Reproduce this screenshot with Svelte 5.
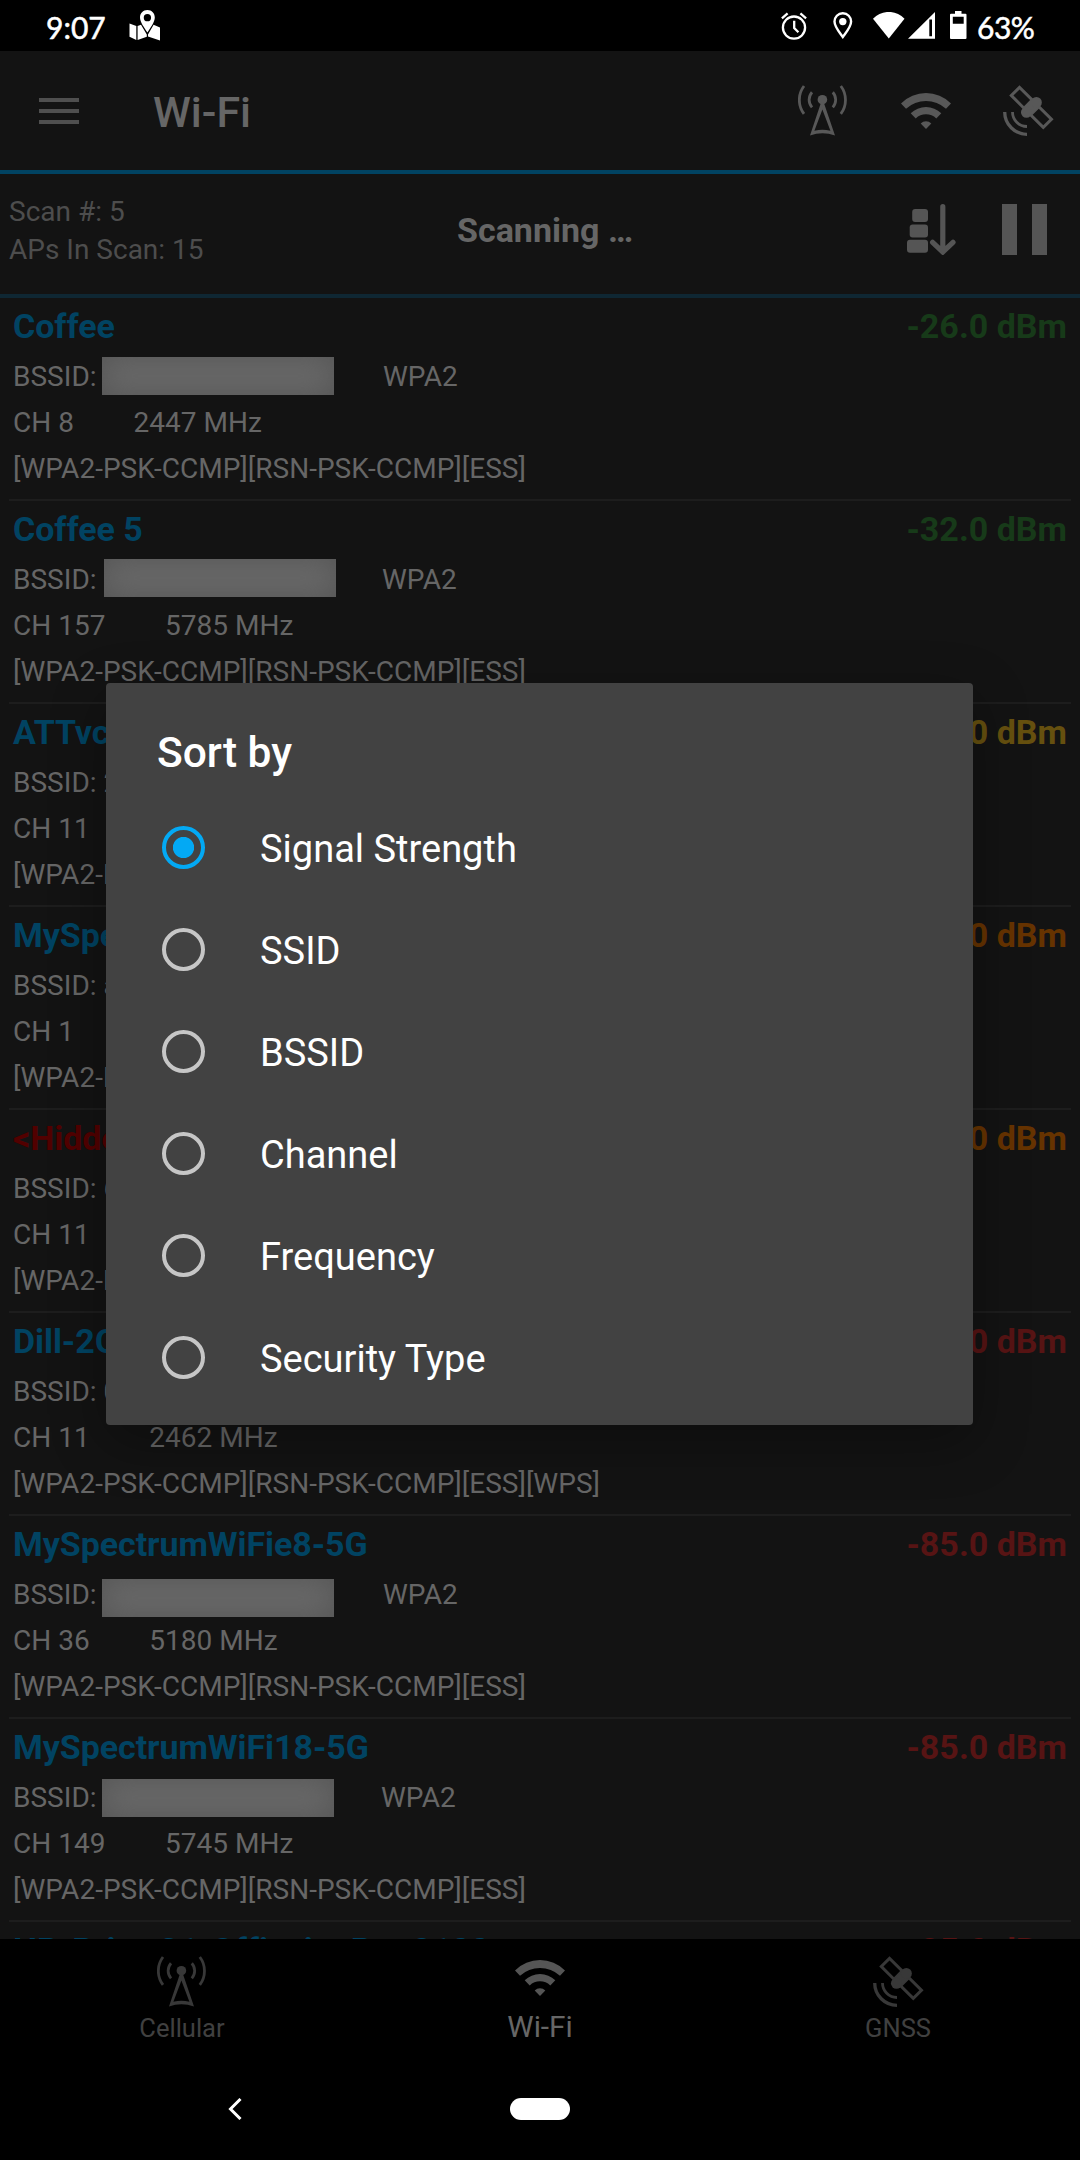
<script>
  const networks = [
    { ssid: 'Coffee', dbm: '-26.0', level: 'great', mac: '', security: 'WPA2', channel: 8, mhz: 2447, caps: '[WPA2-PSK-CCMP][RSN-PSK-CCMP][ESS]', mask: { x: 102, y: 59 }, secX: 370 },
    { ssid: 'Coffee 5', dbm: '-32.0', level: 'great', mac: '', security: 'WPA2', channel: 157, mhz: 5785, caps: '[WPA2-PSK-CCMP][RSN-PSK-CCMP][ESS]', mask: { x: 104, y: 58 }, secX: 369 },
    { ssid: 'ATTvc', dbm: '-64.0', level: 'good', mac: '2', security: '', channel: 11, mhz: 2462, caps: '[WPA2-PSK-CCMP][ESS]', secX: 370 },
    { ssid: 'MySpectrumWiFi', dbm: '-76.0', level: 'fair', mac: 'a', security: '', channel: 1, mhz: 2412, caps: '[WPA2-PSK-CCMP][ESS]', secX: 370 },
    { ssid: '<Hidden SSID>', dbm: '-77.0', level: 'fair', hidden: true, mac: '6', security: '', channel: 11, mhz: 2462, caps: '[WPA2-PSK-CCMP][ESS]', secX: 370 },
    { ssid: 'Dill-2G', dbm: '-84.0', level: 'poor', mac: '0', security: '', channel: 11, mhz: 2462, caps: '[WPA2-PSK-CCMP][RSN-PSK-CCMP][ESS][WPS]', secX: 370 },
    { ssid: 'MySpectrumWiFie8-5G', dbm: '-85.0', level: 'poor', mac: '', security: 'WPA2', channel: 36, mhz: 5180, caps: '[WPA2-PSK-CCMP][RSN-PSK-CCMP][ESS]', mask: { x: 102, y: 63 }, secX: 370 },
    { ssid: 'MySpectrumWiFi18-5G', dbm: '-85.0', level: 'poor', mac: '', security: 'WPA2', channel: 149, mhz: 5745, caps: '[WPA2-PSK-CCMP][RSN-PSK-CCMP][ESS]', mask: { x: 102, y: 60 }, secX: 368 },
    { ssid: 'HP-Print-21-Officejet Pro 8100', dbm: '-85.0', level: 'poor', mac: '', security: 'WPA2', channel: 6, mhz: 2437, caps: '[ESS]', secX: 370 }
  ];

  const sortOptions = ['Signal Strength', 'SSID', 'BSSID', 'Channel', 'Frequency', 'Security Type'];
  let selected = $state('Signal Strength');

  const tabs = [
    { label: 'Cellular', icon: 'tower' },
    { label: 'Wi-Fi', icon: 'wifi', active: true },
    { label: 'GNSS', icon: 'satellite' }
  ];
</script>

{#snippet icon(name)}
  <svg class="icon" viewBox="0 0 51 51" fill="currentColor" stroke="none">
    {#if name === 'tower'}
      <circle cx="24.4" cy="14.7" r="4.8" />
      <path fill-rule="evenodd" d="M23.2 17h2.4L37 50.6Q24.4 46 12 50.6ZM24.4 24.5L16.4 45.8Q24.4 43.6 32.4 45.8Z" />
      <g fill="none" stroke="currentColor" stroke-width="2.8">
        <path d="M6 1A23 23 0 0 0 6 28.8M14 7.2A11.5 11.5 0 0 0 14 22.4" />
        <path d="M42.8 1A23 23 0 0 1 42.8 28.8M34.8 7.2A11.5 11.5 0 0 1 34.8 22.4" />
      </g>
    {:else if name === 'wifi'}
      <g transform="translate(0 8)">
        <path d="M0 10.4A35.5 35.5 0 0 1 50 10.4L45 15.8A29.8 29.8 0 0 0 5 15.8Z" />
        <path d="M9.7 20.3A21.7 21.7 0 0 1 40.3 20.3L35.3 25.4A15 15 0 0 0 14.7 25.4Z" />
        <path d="M19.7 30.4A7.6 7.6 0 0 1 30.3 30.4L25 36Z" />
      </g>
    {:else}
      <g transform="translate(28.4 22.4) rotate(45)">
        <g fill="none" stroke="currentColor" stroke-width="3">
          <rect x="-22.6" y="-5.8" width="18" height="11.6" />
          <rect x="4.6" y="-5.8" width="18" height="11.6" />
        </g>
        <rect x="-5" y="-7" width="10" height="14" />
        <circle cy="-7" r="5.5" />
        <circle cy="7" r="5.5" />
      </g>
      <path fill="none" stroke="currentColor" stroke-width="3.3" d="M1.7 27A22.3 22.3 0 0 0 24 49.3" />
      <path fill="none" stroke="currentColor" stroke-width="2.8" d="M9.5 27A14.5 14.5 0 0 0 24 41.5" />
    {/if}
  </svg>
{/snippet}

<div class="screen">
  <header class="status">
    <span class="clock">9:07</span>
    <svg class="map" viewBox="0 0 31 31" fill="#fff">
      <path d="M.5 13.5L7.3 16V30L.5 26.8ZM8.6 16L12 14.8 17.8 24.5V26.8L8.6 30ZM19 24.5L24.6 14.8 31 17.4V30.6L19 26.6Z" />
      <path fill-rule="evenodd" d="M18.4 0C22.8 0 25.8 3.3 25.8 7.4 25.8 12 21.5 17.5 18.4 22.6 15.3 17.5 11 12 11 7.4 11 3.3 14 0 18.4 0ZM18.4 4A3.6 3.6 0 1 0 18.4 11.3 3.6 3.6 0 1 0 18.4 4Z" />
    </svg>
    <span class="grow"></span>
    <svg class="alarm" viewBox="0 0 26 28" fill="none" stroke="#fff" stroke-width="2.3">
      <circle cx="13" cy="15.6" r="11.1" />
      <path d="M13.2 8.8V16L17.4 20.2M.9 6.4L6.6 1.4M25.1 6.4L19.4 1.4" />
    </svg>
    <svg class="place" viewBox="0 0 20 27">
      <path fill="none" stroke="#fff" stroke-width="2.4" d="M9.8 1.3C5 1.3 1.5 5 1.5 9.6 1.5 15 6.5 20.5 9.8 25 13.1 20.5 18.1 15 18.1 9.6 18.1 5 14.6 1.3 9.8 1.3Z" />
      <circle cx="9.8" cy="9.6" r="3.7" fill="#fff" />
    </svg>
    <svg class="fan" viewBox="0 0 32 27" fill="#fff"><path d="M0 6.8C9-2.4 22.7-2.4 31.5 6.8L15.8 26.4Z" /></svg>
    <svg class="cell" viewBox="0 0 27 27" fill="#fff"><path fill-rule="evenodd" d="M27 0V26.8H0ZM21.3 7.5V24.2H24V7.5Z" /></svg>
    <svg class="battery" viewBox="0 0 17 28" fill="#fff"><path fill-rule="evenodd" d="M5 0H11.5V2.7H15.5Q16.5 2.7 16.5 3.7V27Q16.5 28 15.5 28H1Q0 28 0 27V3.7Q0 2.7 1 2.7H5ZM2.8 5.7V12.7H13.7V5.7Z" /></svg>
    <span class="percent">63%</span>
  </header>

  <div class="appbar">
    <div class="menu"><i></i><i></i><i></i></div>
    <h1>Wi-Fi</h1>
    <div class="actions">
      {@render icon('tower')}
      {@render icon('wifi')}
      {@render icon('satellite')}
    </div>
  </div>

  <section class="scanbar">
    <div class="counts">
      <div>Scan #: 5</div>
      <div>APs In Scan: 15</div>
    </div>
    <div class="scanning">Scanning …</div>
    <div class="tools">
      <svg class="sort" viewBox="0 0 49 51" fill="currentColor">
        <rect x="5.2" y="5" width="15.8" height="13" rx="3" />
        <rect x="2.7" y="20.4" width="18.3" height="13" rx="3" />
        <rect y="35.7" width="21" height="13" rx="3" />
        <path fill="none" stroke="currentColor" stroke-width="5.2" stroke-linecap="round" d="M35.8 2.7V47M25.6 38.3L35.8 48 46 38.3" />
      </svg>
      <div class="pause"><i></i><i></i></div>
    </div>
  </section>

  <main class="list">
    {#each networks as n}
      <article>
        <div class="head">
          <span class="ssid" class:hidden={n.hidden}>{n.ssid}</span>
          <span class={n.level}>{n.dbm} dBm</span>
        </div>
        <div class="row"><span style:width="{n.secX}px">BSSID: {n.mac}</span><span>{n.security}</span></div>
        <div class="row channel"><span>CH {n.channel}</span><span>{n.mhz} MHz</span></div>
        <div class="row">{n.caps}</div>
        {#if n.mask}
          <div class="mask" style:left="{n.mask.x}px" style:top="{n.mask.y}px"></div>
        {/if}
      </article>
    {/each}
  </main>

  <nav class="tabs">
    {#each tabs as t}
      <div class="tab" class:active={t.active}>
        {@render icon(t.icon)}
        <span>{t.label}</span>
      </div>
    {/each}
  </nav>

  <footer class="system">
    <svg class="back" viewBox="0 0 14 22" fill="none" stroke="#fff" stroke-width="3"><path d="M12.5 1L2.5 11 12.5 21" /></svg>
    <div class="pill"></div>
    <div></div>
  </footer>

  <div class="dialog" role="dialog" aria-label="Sort by">
    <h2>Sort by</h2>
    {#each sortOptions as o}
      <label>
        <input type="radio" name="sort" value={o} bind:group={selected} />
        <span>{o}</span>
      </label>
    {/each}
  </div>
</div>

<style>
  :global(body) { margin: 0; background: #000; }
  .screen {
    position: relative;
    display: flex;
    flex-direction: column;
    width: 1080px;
    height: 2160px;
    overflow: hidden;
    background: #131313;
    color: #666;
    font-family: Roboto, sans-serif;
    font-size: 28px;
    white-space: nowrap;
  }
  svg { display: block; flex: none; }
  h1, h2 { margin: 0; font-weight: 500; font-size: 42.5px; }
  h1 { font-size: 43px; }

  .status {
    display: flex;
    align-items: flex-start;
    box-sizing: border-box;
    flex: none;
    height: 51px;
    padding: 0 45px 0 46px;
    background: #000;
    color: #fff;
    font: 30px/36px Lato, sans-serif;
    -webkit-text-stroke: .5px #fff;
  }
  .clock { width: 83px; margin-top: 9px; }
  .percent { width: 58px; margin-top: 9px; letter-spacing: -.5px; }
  .grow { flex: 1; }
  .map { width: 31px; height: 31px; margin-top: 10px; }
  .alarm { width: 26px; height: 28px; margin: 12px 26px 0 0; }
  .place { width: 20px; height: 27px; margin: 12px 20px 0 0; }
  .fan { width: 32px; height: 27px; margin: 12px 3px 0 0; }
  .cell { width: 27px; height: 27px; margin: 12px 15px 0 0; }
  .battery { width: 17px; height: 28px; margin: 11px 10px 0 0; }

  .appbar {
    display: flex;
    align-items: center;
    box-sizing: border-box;
    flex: none;
    height: 123px;
    padding: 0 26px 0 39px;
    border-bottom: 4px solid #014362;
  }
  .menu { display: grid; gap: 7px; width: 40px; }
  .menu i { height: 4px; background: #4f4f4f; }
  h1 { flex: 1; margin-left: 74px; padding-top: 3px; }
  .icon { width: 51px; height: 51px; }
  .actions { display: flex; gap: 51.5px; margin-top: -1px; color: #585858; }

  .scanbar {
    display: grid;
    grid-template-columns: 448px auto 1fr;
    align-items: center;
    box-sizing: border-box;
    flex: none;
    height: 124px;
    padding: 0 33px 7px 9px;
    border-bottom: 4px solid #0f2733;
  }
  .counts { color: #4d4d4d; line-height: 38px; }
  .scanning { margin-top: -2px; font-size: 34px; font-weight: 700; }
  .tools { display: flex; justify-content: flex-end; gap: 46px; color: #555; margin-top: -3px; }
  .sort { width: 49px; height: 51px; }
  .pause { display: flex; gap: 15px; }
  .pause i { width: 15px; height: 51px; background: currentColor; }

  .list { flex: none; height: 1641px; overflow: hidden; }
  article {
    position: relative;
    height: 193px;
    margin: 0 9px;
    padding: 8px 4px 0;
    border-bottom: 2px solid #1d1d1d;
  }
  .head { display: flex; justify-content: space-between; height: 48px; font-size: 34px; font-weight: 700; line-height: 40px; }
  .ssid { color: #014362; letter-spacing: -.06px; }
  .ssid.hidden { color: #520000; }
  .great { color: #173a19; }
  .good { color: #66500f; }
  .fair { color: #663300; }
  .poor { color: #571414; }
  .row { display: flex; height: 46px; line-height: 46px; letter-spacing: .02px; }
  .channel { gap: 59.5px; }
  .mask {
    position: absolute;
    margin-left: -9px;
    width: 232px;
    height: 38px;
    background: #696969;
    box-shadow: inset 0 0 30px #555;
  }

  .tabs {
    display: grid;
    grid-template-columns: repeat(3, 358px);
    justify-content: center;
    flex: none;
    height: 119px;
    background: #000;
    color: #383838;
  }
  .tab { display: flex; flex-direction: column; align-items: center; padding-top: 17px; font-size: 25.5px; }
  .tab span { margin-top: 6px; line-height: 30px; color: #404040; }
  .tab.active { padding-top: 13px; color: #555; font-size: 29.75px; }
  .tab.active span { margin-top: 9px; color: #666; }

  .system {
    display: grid;
    grid-template-columns: 1fr 60px 1fr;
    justify-items: center;
    align-items: center;
    flex: 1;
    background: #000;
  }
  .back { width: 14px; height: 22px; margin-right: 268px; justify-self: end; }
  .pill { width: 60px; height: 22px; border-radius: 11px; background: #fff; }

  .dialog {
    position: absolute;
    left: 106px;
    top: 683px;
    box-sizing: border-box;
    width: 867px;
    height: 742px;
    border-radius: 4px;
    background: #424242;
    color: #fff;
    box-shadow: 0 16px 56px rgba(0, 0, 0, .32);
  }
  h2 { height: 73px; padding: 40px 0 0 51px; line-height: 60px; }
  label { display: flex; align-items: center; height: 102px; padding-left: 55.5px; font-size: 38px; }
  label span { margin: 4px 0 0 55.5px; }
  input {
    appearance: none;
    box-sizing: border-box;
    flex: none;
    width: 43px;
    height: 43px;
    margin: 0;
    border: 4.25px solid #c6c6c6;
    border-radius: 50%;
  }
  input:checked {
    border-color: #03a9f4;
    background: radial-gradient(circle, #03a9f4 10.2px, transparent 11px);
  }
</style>
